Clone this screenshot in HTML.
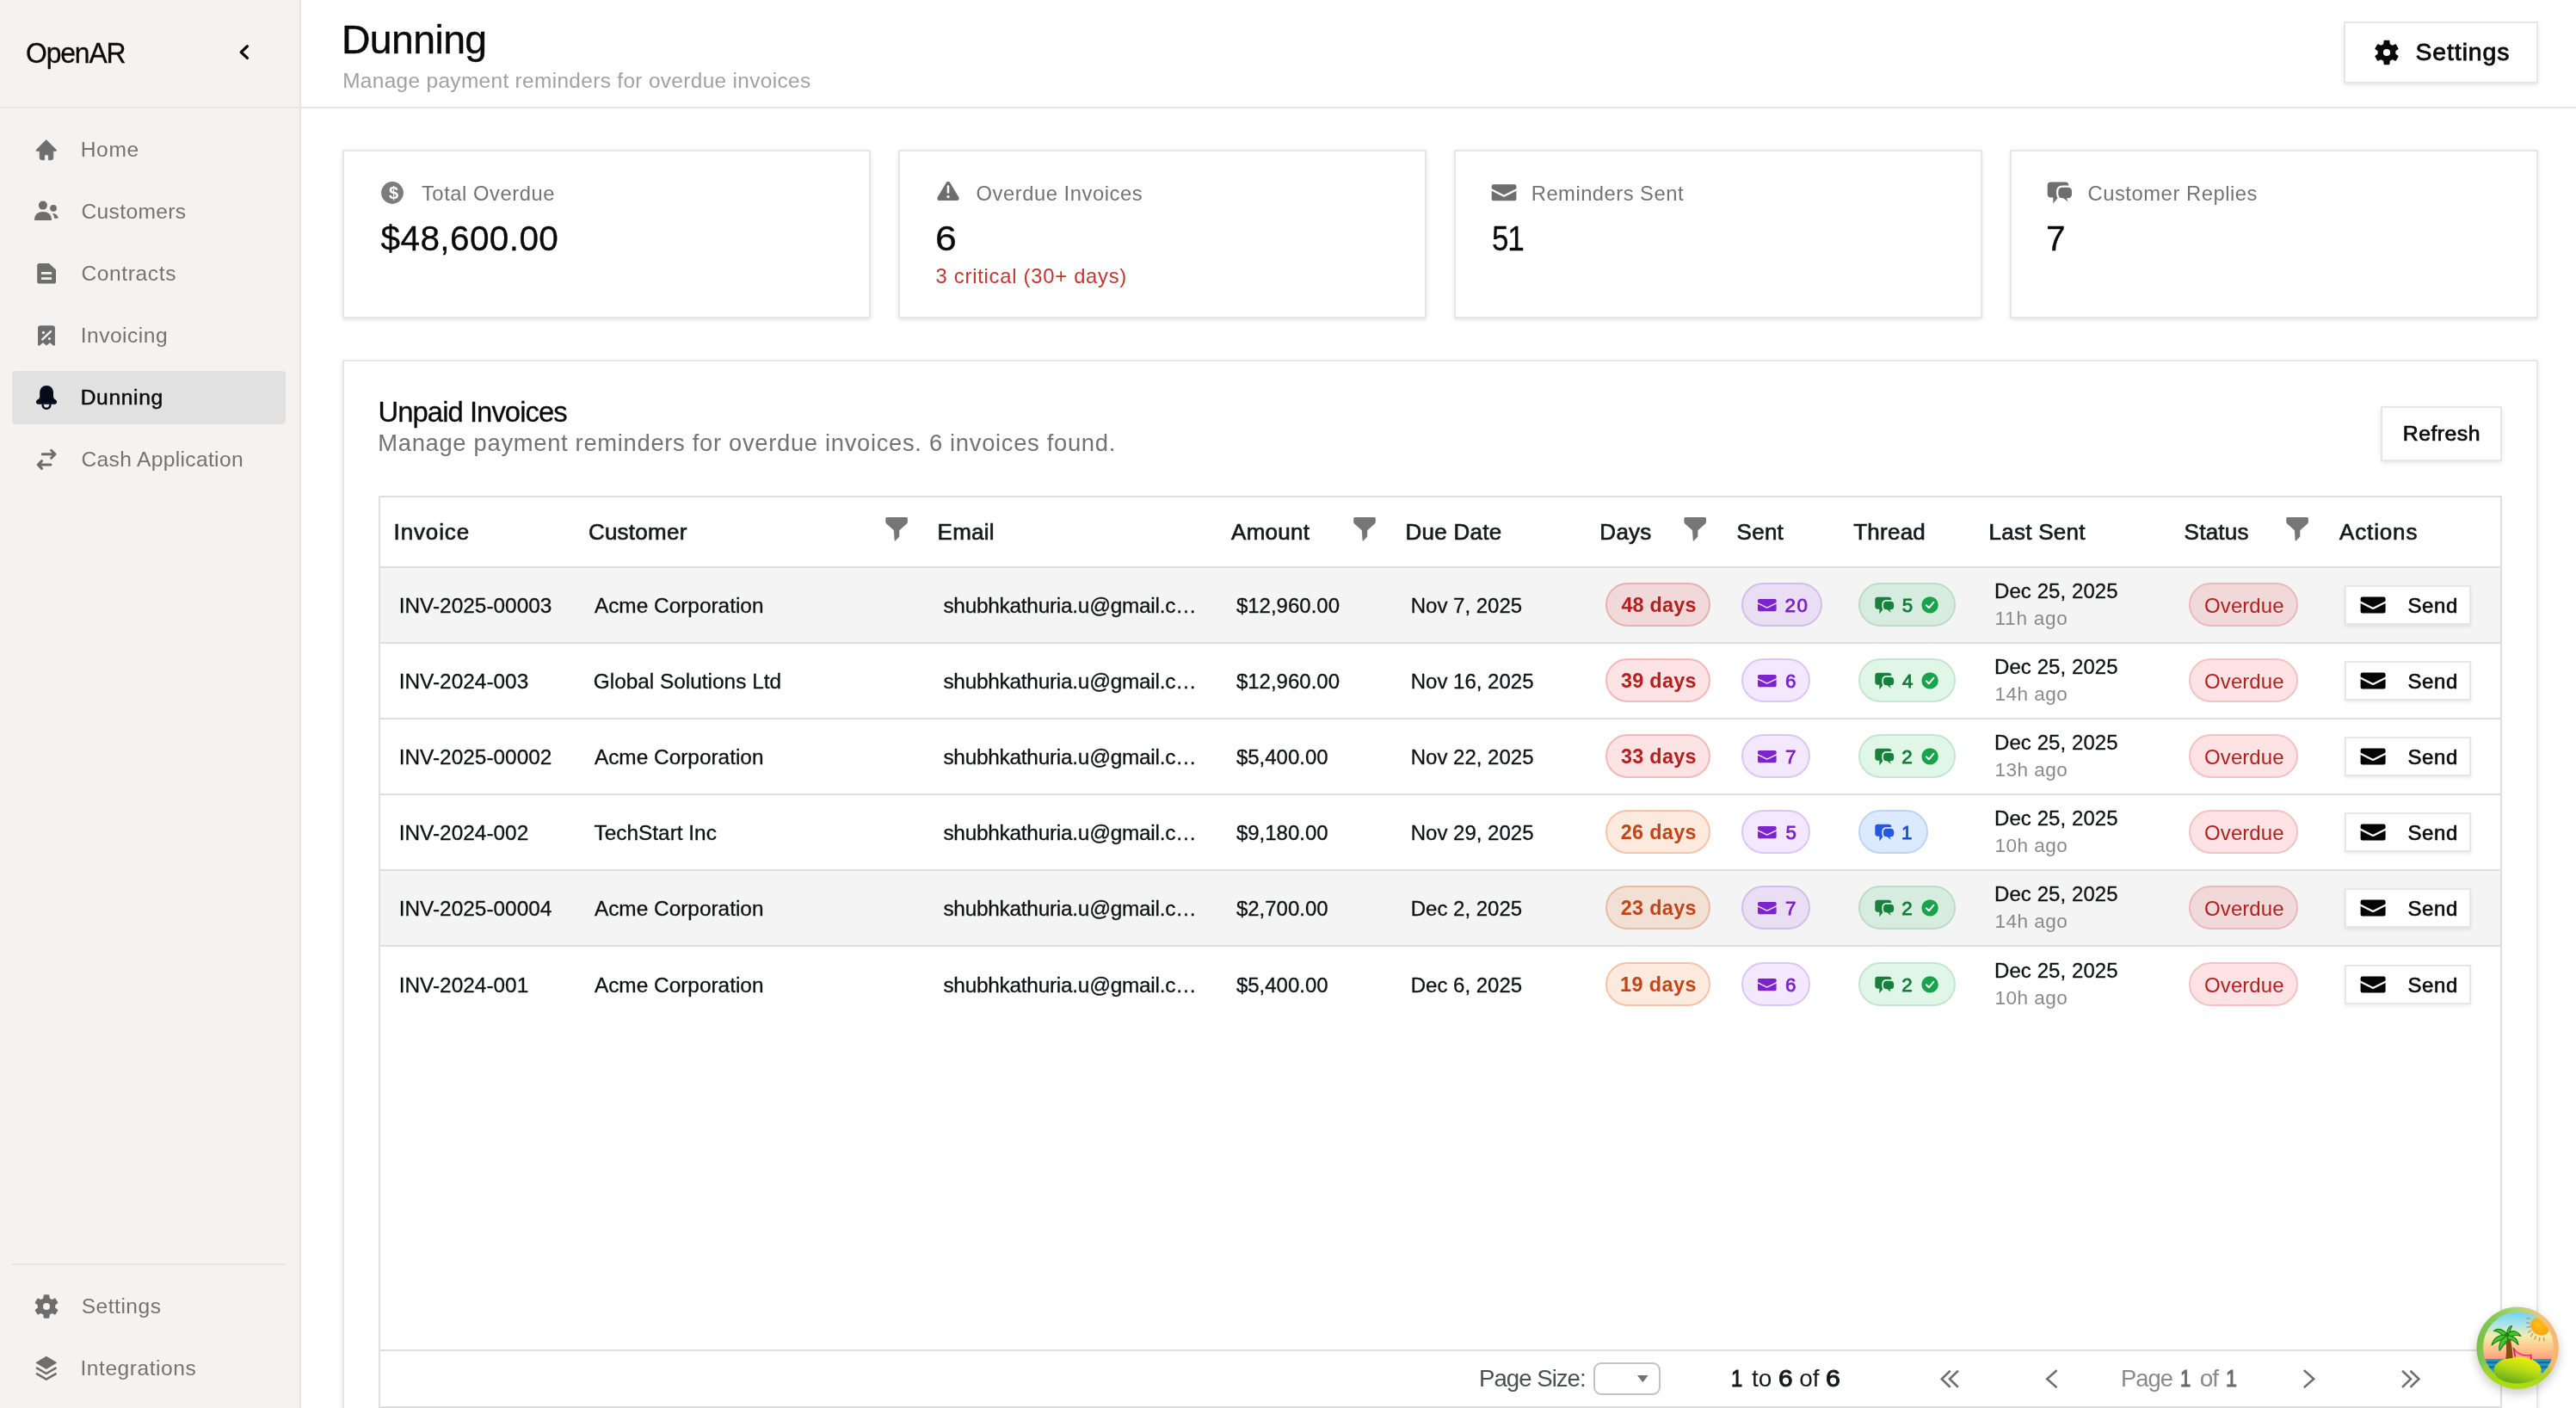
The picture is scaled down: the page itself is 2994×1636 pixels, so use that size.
<!DOCTYPE html>
<html lang="en"><head><meta charset="utf-8"><title>OpenAR - Dunning</title>
<style>
html,body{margin:0;padding:0;background:#fff;overflow:hidden;}
body{width:2994px;height:1636px;font-family:"Liberation Sans", sans-serif;}
#page{position:relative;width:2994px;height:1636px;overflow:hidden;background:#fff;}
#boxes div{position:absolute;box-sizing:border-box;}
#txt{position:absolute;left:0;top:0;width:2994px;height:1636px;will-change:transform;}
#txt span{position:absolute;white-space:nowrap;transform-origin:0 50%;font-family:"Liberation Sans", sans-serif;}
#ico{position:absolute;left:0;top:0;}
</style></head>
<body>
<div id="page">
<div id="boxes">
<div style="left:0px;top:0px;width:348px;height:1636px;background:#f4f3f1"></div>
<div style="left:348px;top:0px;width:2px;height:1636px;background:#e6e6e6"></div>
<div style="left:0px;top:124px;width:348px;height:2px;background:#e6e6e6"></div>
<div style="left:350px;top:124px;width:2644px;height:2px;background:#e6e6e6"></div>
<div style="left:14px;top:430.5px;width:318px;height:62.5px;background:#e1e1e1;border-radius:4px"></div>
<div style="left:14px;top:1468px;width:318px;height:2px;background:#e6e5e3"></div>
<div style="left:2724px;top:25px;width:226px;height:72px;background:#fff;border:2px solid #e6e6e6;box-shadow:0 2px 6px rgba(0,0,0,0.08),0 2px 4px -2px rgba(0,0,0,0.08);"></div>
<div style="left:398px;top:174px;width:614px;height:196px;background:#fff;border:2px solid #e6e6e6;box-shadow:0 2px 6px rgba(0,0,0,0.08),0 2px 4px -2px rgba(0,0,0,0.08);"></div>
<div style="left:1044px;top:174px;width:614px;height:196px;background:#fff;border:2px solid #e6e6e6;box-shadow:0 2px 6px rgba(0,0,0,0.08),0 2px 4px -2px rgba(0,0,0,0.08);"></div>
<div style="left:1690px;top:174px;width:614px;height:196px;background:#fff;border:2px solid #e6e6e6;box-shadow:0 2px 6px rgba(0,0,0,0.08),0 2px 4px -2px rgba(0,0,0,0.08);"></div>
<div style="left:2336px;top:174px;width:614px;height:196px;background:#fff;border:2px solid #e6e6e6;box-shadow:0 2px 6px rgba(0,0,0,0.08),0 2px 4px -2px rgba(0,0,0,0.08);"></div>
<div style="left:398px;top:418px;width:2552px;height:1230px;background:#fff;border:2px solid #e6e6e6;box-shadow:0 2px 6px rgba(0,0,0,0.08),0 2px 4px -2px rgba(0,0,0,0.08);"></div>
<div style="left:2767px;top:472px;width:141px;height:64px;background:#fff;border:2px solid #e6e6e6;box-shadow:0 2px 6px rgba(0,0,0,0.08),0 2px 4px -2px rgba(0,0,0,0.08);"></div>
<div style="left:440px;top:576px;width:2468px;height:1060px;background:#fff;border:2px solid #dedede"></div>
<div style="left:442px;top:658px;width:2464px;height:2px;background:#dedede"></div>
<div style="left:442px;top:1568px;width:2464px;height:2px;background:#dedede"></div>
<div style="left:442px;top:660px;width:2464px;height:86px;background:#f4f4f4"></div>
<div style="left:442px;top:746px;width:2464px;height:2px;background:#dedede"></div>
<div style="left:1866px;top:677px;width:122px;height:51px;background:#f2d9d9;border:2px solid #e7b1b1;border-radius:26px"></div>
<div style="left:2024px;top:677px;width:94px;height:51px;background:#e9def4;border:2px solid #d3bdea;border-radius:26px"></div>
<div style="left:2160px;top:677px;width:113px;height:51px;background:#d6ecde;border:2px solid #bcdcc5;border-radius:26px"></div>
<div style="left:2544px;top:677px;width:127px;height:51px;background:#f2d9d9;border:2px solid #e9baba;border-radius:26px"></div>
<div style="left:2725px;top:680px;width:147px;height:46px;background:#fff;border:2px solid #e6e6e6;box-shadow:0 2px 4px rgba(0,0,0,0.08);"></div>
<div style="left:442px;top:834px;width:2464px;height:2px;background:#dedede"></div>
<div style="left:1866px;top:765px;width:122px;height:51px;background:#fde3e3;border:2px solid #f1b9b9;border-radius:26px"></div>
<div style="left:2024px;top:765px;width:80px;height:51px;background:#f3e8ff;border:2px solid #dcc6f5;border-radius:26px"></div>
<div style="left:2160px;top:765px;width:113px;height:51px;background:#e0f7e8;border:2px solid #c4e6ce;border-radius:26px"></div>
<div style="left:2544px;top:765px;width:127px;height:51px;background:#fde3e3;border:2px solid #f3c2c2;border-radius:26px"></div>
<div style="left:2725px;top:768px;width:147px;height:46px;background:#fff;border:2px solid #e6e6e6;box-shadow:0 2px 4px rgba(0,0,0,0.08);"></div>
<div style="left:442px;top:922px;width:2464px;height:2px;background:#dedede"></div>
<div style="left:1866px;top:853px;width:122px;height:51px;background:#fde3e3;border:2px solid #f1b9b9;border-radius:26px"></div>
<div style="left:2024px;top:853px;width:80px;height:51px;background:#f3e8ff;border:2px solid #dcc6f5;border-radius:26px"></div>
<div style="left:2160px;top:853px;width:113px;height:51px;background:#e0f7e8;border:2px solid #c4e6ce;border-radius:26px"></div>
<div style="left:2544px;top:853px;width:127px;height:51px;background:#fde3e3;border:2px solid #f3c2c2;border-radius:26px"></div>
<div style="left:2725px;top:856px;width:147px;height:46px;background:#fff;border:2px solid #e6e6e6;box-shadow:0 2px 4px rgba(0,0,0,0.08);"></div>
<div style="left:442px;top:1010px;width:2464px;height:2px;background:#dedede"></div>
<div style="left:1866px;top:941px;width:122px;height:51px;background:#fdeadf;border:2px solid #f3c3aa;border-radius:26px"></div>
<div style="left:2024px;top:941px;width:80px;height:51px;background:#f3e8ff;border:2px solid #dcc6f5;border-radius:26px"></div>
<div style="left:2160px;top:941px;width:81px;height:51px;background:#dbeafe;border:2px solid #bfd3f7;border-radius:26px"></div>
<div style="left:2544px;top:941px;width:127px;height:51px;background:#fde3e3;border:2px solid #f3c2c2;border-radius:26px"></div>
<div style="left:2725px;top:944px;width:147px;height:46px;background:#fff;border:2px solid #e6e6e6;box-shadow:0 2px 4px rgba(0,0,0,0.08);"></div>
<div style="left:442px;top:1012px;width:2464px;height:86px;background:#f4f4f4"></div>
<div style="left:442px;top:1098px;width:2464px;height:2px;background:#dedede"></div>
<div style="left:1866px;top:1029px;width:122px;height:51px;background:#f2e0d5;border:2px solid #e9bba3;border-radius:26px"></div>
<div style="left:2024px;top:1029px;width:80px;height:51px;background:#e9def4;border:2px solid #d3bdea;border-radius:26px"></div>
<div style="left:2160px;top:1029px;width:113px;height:51px;background:#d6ecde;border:2px solid #bcdcc5;border-radius:26px"></div>
<div style="left:2544px;top:1029px;width:127px;height:51px;background:#f2d9d9;border:2px solid #e9baba;border-radius:26px"></div>
<div style="left:2725px;top:1032px;width:147px;height:46px;background:#fff;border:2px solid #e6e6e6;box-shadow:0 2px 4px rgba(0,0,0,0.08);"></div>
<div style="left:1866px;top:1118px;width:122px;height:51px;background:#fdeadf;border:2px solid #f3c3aa;border-radius:26px"></div>
<div style="left:2024px;top:1118px;width:80px;height:51px;background:#f3e8ff;border:2px solid #dcc6f5;border-radius:26px"></div>
<div style="left:2160px;top:1118px;width:113px;height:51px;background:#e0f7e8;border:2px solid #c4e6ce;border-radius:26px"></div>
<div style="left:2544px;top:1118px;width:127px;height:51px;background:#fde3e3;border:2px solid #f3c2c2;border-radius:26px"></div>
<div style="left:2725px;top:1121px;width:147px;height:46px;background:#fff;border:2px solid #e6e6e6;box-shadow:0 2px 4px rgba(0,0,0,0.08);"></div>
<div style="left:1851.5px;top:1582.7px;width:78.8px;height:38.8px;background:#fff;border:2px solid #c2c2c2;border-radius:9px"></div>
</div>
<svg id="ico" width="2994" height="1636" viewBox="0 0 2994 1636">
<path d="M287.4 53.8 L280.2 60.6 L287.4 67.4" fill="none" stroke="#0a0a0a" stroke-width="3.3" stroke-linecap="round" stroke-linejoin="round"/>
<path d="M53.8 162.6 L65.2 173.9 Q66.2 175.6 64.4 175.6 L61.8 175.6 L61.8 183.4 Q61.8 185.8 59.4 185.8 L56.4 185.8 L56.4 181.6 Q56.4 179.6 54 179.6 Q51.6 179.6 51.6 181.6 L51.6 185.8 L48.6 185.8 Q46.2 185.8 46.2 183.4 L46.2 175.6 L43.2 175.6 Q41.4 175.6 42.4 173.9 Z" fill="#6e6e6e" stroke="#6e6e6e" stroke-width="0.8" stroke-linejoin="round"/>
<circle cx="49.9" cy="238.6" r="5" fill="#6e6e6e"/><path d="M40.4 255.9 Q39.9 255.9 40 254.5 Q41 246 50 246 Q59 246 60 254.5 Q60.1 255.9 59.6 255.9 Z" fill="#6e6e6e"/><circle cx="62" cy="241.8" r="3.9" fill="#6e6e6e"/><path d="M60.9 248 Q66.3 248.2 67.6 252.6 Q67.8 253.8 66.6 253.8 L63.2 253.8 Q62.9 250.4 60.9 248 Z" fill="#6e6e6e"/>
<path d="M45.8 306 L57 306 L65 313.6 L65 327 Q65 329.6 62.4 329.6 L45.8 329.6 Q43.2 329.6 43.2 327 L43.2 308.6 Q43.2 306 45.8 306 Z" fill="#6e6e6e"/><rect x="47.9" y="316.1" width="12.3" height="2.7" rx="0.6" fill="#f4f3f1"/><rect x="47.9" y="322.2" width="12.3" height="2.7" rx="0.6" fill="#f4f3f1"/>
<path d="M47 378.2 L60.9 378.2 Q63.9 378.2 63.9 381.2 L63.9 401.4 L62 401.4 L58 398.2 L53.9 401.4 L49.9 398.2 L45.9 401.4 L44 401.4 L44 381.2 Q44 378.2 47 378.2 Z" fill="#6e6e6e"/><path d="M49.3 394.4 L59 385.1" stroke="#f4f3f1" stroke-width="2.4" stroke-linecap="round"/><circle cx="50.4" cy="386.4" r="1.6" fill="#f4f3f1"/><circle cx="57.5" cy="393.5" r="1.6" fill="#f4f3f1"/>
<path d="M46.2 466 V456.2 C46.2 451.4 49.6 448 54.1 448 C58.6 448 62 451.4 62 456.2 V466 Z" fill="#060b19"/><path d="M46.2 460 Q46 463.6 43.4 464.6 L46.2 466 Z M62 460 Q62.2 463.6 64.8 464.6 L62 466 Z" fill="#060b19"/><rect x="42" y="464.3" width="24" height="5.5" rx="2.75" fill="#060b19"/><path d="M49.6 470.5 Q50 474.7 54 474.7 Q58 474.7 58.4 470.5" fill="none" stroke="#060b19" stroke-width="2.5" stroke-linecap="round"/>
<path d="M49.2 527.7 H63.6 M59.6 523.3 L64 527.7 L59.6 532.1 M59 540 H44.6 M48.6 535.6 L44.2 540 L48.6 544.4" fill="none" stroke="#6e6e6e" stroke-width="3.0" stroke-linecap="round" stroke-linejoin="round"/>
<path d="M56.97 1508.87 L56.52 1505.04 L51.48 1505.04 L51.03 1508.87 L47.58 1510.87 L44.04 1509.34 L41.52 1513.70 L44.61 1516.00 L44.61 1520.00 L41.52 1522.30 L44.04 1526.66 L47.58 1525.13 L51.03 1527.13 L51.48 1530.96 L56.52 1530.96 L56.97 1527.13 L60.42 1525.13 L63.96 1526.66 L66.48 1522.30 L63.39 1520.00 L63.39 1516.00 L66.48 1513.70 L63.96 1509.34 L60.42 1510.87 Z" fill="#6e6e6e" stroke="#6e6e6e" stroke-width="1.6" stroke-linejoin="round"/><circle cx="54" cy="1518" r="4.0" fill="#f4f3f1"/>
<path d="M42.6 1583.4 L53.8 1576.8 L65 1583.4 L53.8 1590 Z" fill="#6e6e6e" stroke="#6e6e6e" stroke-width="1.6" stroke-linejoin="round"/><path d="M43 1589.6 L53.8 1596 L64.6 1589.6 M43 1596.3 L53.8 1602.7 L64.6 1596.3" fill="none" stroke="#6e6e6e" stroke-width="2.6" stroke-linecap="round" stroke-linejoin="round"/>
<path d="M2777.03 51.68 L2776.60 47.65 L2771.40 47.65 L2770.97 51.68 L2767.44 53.72 L2763.74 52.08 L2761.14 56.57 L2764.41 58.96 L2764.41 63.04 L2761.14 65.43 L2763.74 69.92 L2767.44 68.28 L2770.97 70.32 L2771.40 74.35 L2776.60 74.35 L2777.03 70.32 L2780.56 68.28 L2784.26 69.92 L2786.86 65.43 L2783.59 63.04 L2783.59 58.96 L2786.86 56.57 L2784.26 52.08 L2780.56 53.72 Z" fill="#0a0a0a" stroke="#0a0a0a" stroke-width="1.6" stroke-linejoin="round"/><circle cx="2774" cy="61" r="4.1" fill="#fff"/>
<circle cx="456" cy="224" r="12.9" fill="#7c7c7c"/>
<path d="M1102 213.6 L1112 230.4 L1092 230.4 Z" fill="#6e6e6e" stroke="#6e6e6e" stroke-width="5.2" stroke-linejoin="round"/><path d="M1102 216.6 V223.4" stroke="#fff" stroke-width="2.6" stroke-linecap="round"/><circle cx="1102" cy="228.6" r="1.7" fill="#fff"/>
<rect x="1733.7" y="214.2" width="28.7" height="19" rx="2.2" fill="#6e6e6e"/><path d="M1732.7 219.91 L1748.05 227.69 L1763.4 219.91" fill="none" stroke="#fff" stroke-width="2.3" stroke-linejoin="round"/>
<path d="M2383.70 211.40 L2400.20 211.40 Q2404.40 211.40 2404.40 215.40 L2404.40 225.40 Q2404.40 229.50 2400.20 229.50 L2392.00 229.50 L2386.30 236.60 L2386.30 229.50 L2383.70 229.50 Q2379.70 229.50 2379.70 225.40 L2379.70 215.40 Q2379.70 211.40 2383.70 211.40 Z" fill="#6e6e6e"/><path d="M2397.30 217.70 L2403.10 217.70 Q2408.10 217.70 2408.10 222.70 L2408.10 225.20 Q2408.10 230.20 2403.10 230.20 L2402.00 230.20 L2403.70 234.60 L2398.20 230.20 L2397.30 230.20 Q2392.30 230.20 2392.30 225.20 L2392.30 222.70 Q2392.30 217.70 2397.30 217.70 Z" fill="#6e6e6e" stroke="#fff" stroke-width="4.40" stroke-linejoin="round" paint-order="stroke"/>
<path transform="translate(1029.3 601)" d="M1.5 0 H24.1 Q25.6 0 25.6 1.5 V5.4 Q25.6 6.6 24.7 7.4 L16 15.3 V21.4 Q16 22.6 15.1 23.4 L11.5 27.2 Q10.4 28.1 10.3 26.6 L9.6 15.3 L0.9 7.4 Q0 6.6 0 5.4 V1.5 Q0 0 1.5 0 Z" fill="#767676"/>
<path transform="translate(1573.2 601)" d="M1.5 0 H24.1 Q25.6 0 25.6 1.5 V5.4 Q25.6 6.6 24.7 7.4 L16 15.3 V21.4 Q16 22.6 15.1 23.4 L11.5 27.2 Q10.4 28.1 10.3 26.6 L9.6 15.3 L0.9 7.4 Q0 6.6 0 5.4 V1.5 Q0 0 1.5 0 Z" fill="#767676"/>
<path transform="translate(1957.4 601)" d="M1.5 0 H24.1 Q25.6 0 25.6 1.5 V5.4 Q25.6 6.6 24.7 7.4 L16 15.3 V21.4 Q16 22.6 15.1 23.4 L11.5 27.2 Q10.4 28.1 10.3 26.6 L9.6 15.3 L0.9 7.4 Q0 6.6 0 5.4 V1.5 Q0 0 1.5 0 Z" fill="#767676"/>
<path transform="translate(2657.3 601)" d="M1.5 0 H24.1 Q25.6 0 25.6 1.5 V5.4 Q25.6 6.6 24.7 7.4 L16 15.3 V21.4 Q16 22.6 15.1 23.4 L11.5 27.2 Q10.4 28.1 10.3 26.6 L9.6 15.3 L0.9 7.4 Q0 6.6 0 5.4 V1.5 Q0 0 1.5 0 Z" fill="#767676"/>
<rect x="2043" y="696" width="21.6" height="14.2" rx="1.6" fill="#7e22ce"/><path d="M2042 700.37 L2053.8 706.08 L2065.6 700.37" fill="none" stroke="#e9def4" stroke-width="1.5" stroke-linejoin="round"/>
<circle cx="2243.1" cy="702.9" r="9.7" fill="#17a34a"/><path d="M2238.8 703.3 L2241.9 706.3 L2247.5 699.7" fill="none" stroke="#fff" stroke-width="1.9" stroke-linecap="round" stroke-linejoin="round"/>
<path d="M2182.38 693.80 L2195.09 693.80 Q2198.32 693.80 2198.32 696.88 L2198.32 704.58 Q2198.32 707.74 2195.09 707.74 L2188.77 707.74 L2184.38 713.20 L2184.38 707.74 L2182.38 707.74 Q2179.30 707.74 2179.30 704.58 L2179.30 696.88 Q2179.30 693.80 2182.38 693.80 Z" fill="#17803d"/><path d="M2192.85 698.65 L2197.32 698.65 Q2201.17 698.65 2201.17 702.50 L2201.17 704.43 Q2201.17 708.28 2197.32 708.28 L2196.47 708.28 L2197.78 711.66 L2193.55 708.28 L2192.85 708.28 Q2189.00 708.28 2189.00 704.43 L2189.00 702.50 Q2189.00 698.65 2192.85 698.65 Z" fill="#17803d" stroke="#d6ecde" stroke-width="3.39" stroke-linejoin="round" paint-order="stroke"/>
<rect x="2743.6" y="693.6" width="29" height="18.8" rx="2.2" fill="#050505"/><path d="M2742.6 699.28 L2758.1 706.95 L2773.6 699.28" fill="none" stroke="#fff" stroke-width="2.2" stroke-linejoin="round"/>
<rect x="2043" y="784" width="21.6" height="14.2" rx="1.6" fill="#7e22ce"/><path d="M2042 788.37 L2053.8 794.08 L2065.6 788.37" fill="none" stroke="#f3e8ff" stroke-width="1.5" stroke-linejoin="round"/>
<circle cx="2243.1" cy="790.9" r="9.7" fill="#17a34a"/><path d="M2238.8 791.3 L2241.9 794.3 L2247.5 787.7" fill="none" stroke="#fff" stroke-width="1.9" stroke-linecap="round" stroke-linejoin="round"/>
<path d="M2182.38 781.80 L2195.09 781.80 Q2198.32 781.80 2198.32 784.88 L2198.32 792.58 Q2198.32 795.74 2195.09 795.74 L2188.77 795.74 L2184.38 801.20 L2184.38 795.74 L2182.38 795.74 Q2179.30 795.74 2179.30 792.58 L2179.30 784.88 Q2179.30 781.80 2182.38 781.80 Z" fill="#17803d"/><path d="M2192.85 786.65 L2197.32 786.65 Q2201.17 786.65 2201.17 790.50 L2201.17 792.43 Q2201.17 796.28 2197.32 796.28 L2196.47 796.28 L2197.78 799.66 L2193.55 796.28 L2192.85 796.28 Q2189.00 796.28 2189.00 792.43 L2189.00 790.50 Q2189.00 786.65 2192.85 786.65 Z" fill="#17803d" stroke="#e0f7e8" stroke-width="3.39" stroke-linejoin="round" paint-order="stroke"/>
<rect x="2743.6" y="781.6" width="29" height="18.8" rx="2.2" fill="#050505"/><path d="M2742.6 787.28 L2758.1 794.95 L2773.6 787.28" fill="none" stroke="#fff" stroke-width="2.2" stroke-linejoin="round"/>
<rect x="2043" y="872" width="21.6" height="14.2" rx="1.6" fill="#7e22ce"/><path d="M2042 876.37 L2053.8 882.08 L2065.6 876.37" fill="none" stroke="#f3e8ff" stroke-width="1.5" stroke-linejoin="round"/>
<circle cx="2243.1" cy="878.9" r="9.7" fill="#17a34a"/><path d="M2238.8 879.3 L2241.9 882.3 L2247.5 875.7" fill="none" stroke="#fff" stroke-width="1.9" stroke-linecap="round" stroke-linejoin="round"/>
<path d="M2182.38 869.80 L2195.09 869.80 Q2198.32 869.80 2198.32 872.88 L2198.32 880.58 Q2198.32 883.74 2195.09 883.74 L2188.77 883.74 L2184.38 889.20 L2184.38 883.74 L2182.38 883.74 Q2179.30 883.74 2179.30 880.58 L2179.30 872.88 Q2179.30 869.80 2182.38 869.80 Z" fill="#17803d"/><path d="M2192.85 874.65 L2197.32 874.65 Q2201.17 874.65 2201.17 878.50 L2201.17 880.43 Q2201.17 884.28 2197.32 884.28 L2196.47 884.28 L2197.78 887.66 L2193.55 884.28 L2192.85 884.28 Q2189.00 884.28 2189.00 880.43 L2189.00 878.50 Q2189.00 874.65 2192.85 874.65 Z" fill="#17803d" stroke="#e0f7e8" stroke-width="3.39" stroke-linejoin="round" paint-order="stroke"/>
<rect x="2743.6" y="869.6" width="29" height="18.8" rx="2.2" fill="#050505"/><path d="M2742.6 875.28 L2758.1 882.95 L2773.6 875.28" fill="none" stroke="#fff" stroke-width="2.2" stroke-linejoin="round"/>
<rect x="2043" y="960" width="21.6" height="14.2" rx="1.6" fill="#7e22ce"/><path d="M2042 964.37 L2053.8 970.08 L2065.6 964.37" fill="none" stroke="#f3e8ff" stroke-width="1.5" stroke-linejoin="round"/>
<path d="M2182.38 957.80 L2195.09 957.80 Q2198.32 957.80 2198.32 960.88 L2198.32 968.58 Q2198.32 971.74 2195.09 971.74 L2188.77 971.74 L2184.38 977.20 L2184.38 971.74 L2182.38 971.74 Q2179.30 971.74 2179.30 968.58 L2179.30 960.88 Q2179.30 957.80 2182.38 957.80 Z" fill="#2459df"/><path d="M2192.85 962.65 L2197.32 962.65 Q2201.17 962.65 2201.17 966.50 L2201.17 968.43 Q2201.17 972.28 2197.32 972.28 L2196.47 972.28 L2197.78 975.66 L2193.55 972.28 L2192.85 972.28 Q2189.00 972.28 2189.00 968.43 L2189.00 966.50 Q2189.00 962.65 2192.85 962.65 Z" fill="#2459df" stroke="#dbeafe" stroke-width="3.39" stroke-linejoin="round" paint-order="stroke"/>
<rect x="2743.6" y="957.6" width="29" height="18.8" rx="2.2" fill="#050505"/><path d="M2742.6 963.28 L2758.1 970.95 L2773.6 963.28" fill="none" stroke="#fff" stroke-width="2.2" stroke-linejoin="round"/>
<rect x="2043" y="1048" width="21.6" height="14.2" rx="1.6" fill="#7e22ce"/><path d="M2042 1052.37 L2053.8 1058.08 L2065.6 1052.37" fill="none" stroke="#e9def4" stroke-width="1.5" stroke-linejoin="round"/>
<circle cx="2243.1" cy="1054.9" r="9.7" fill="#17a34a"/><path d="M2238.8 1055.3 L2241.9 1058.3 L2247.5 1051.7" fill="none" stroke="#fff" stroke-width="1.9" stroke-linecap="round" stroke-linejoin="round"/>
<path d="M2182.38 1045.80 L2195.09 1045.80 Q2198.32 1045.80 2198.32 1048.88 L2198.32 1056.58 Q2198.32 1059.74 2195.09 1059.74 L2188.77 1059.74 L2184.38 1065.20 L2184.38 1059.74 L2182.38 1059.74 Q2179.30 1059.74 2179.30 1056.58 L2179.30 1048.88 Q2179.30 1045.80 2182.38 1045.80 Z" fill="#17803d"/><path d="M2192.85 1050.65 L2197.32 1050.65 Q2201.17 1050.65 2201.17 1054.50 L2201.17 1056.43 Q2201.17 1060.28 2197.32 1060.28 L2196.47 1060.28 L2197.78 1063.66 L2193.55 1060.28 L2192.85 1060.28 Q2189.00 1060.28 2189.00 1056.43 L2189.00 1054.50 Q2189.00 1050.65 2192.85 1050.65 Z" fill="#17803d" stroke="#d6ecde" stroke-width="3.39" stroke-linejoin="round" paint-order="stroke"/>
<rect x="2743.6" y="1045.6" width="29" height="18.8" rx="2.2" fill="#050505"/><path d="M2742.6 1051.28 L2758.1 1058.95 L2773.6 1051.28" fill="none" stroke="#fff" stroke-width="2.2" stroke-linejoin="round"/>
<rect x="2043" y="1137" width="21.6" height="14.2" rx="1.6" fill="#7e22ce"/><path d="M2042 1141.37 L2053.8 1147.08 L2065.6 1141.37" fill="none" stroke="#f3e8ff" stroke-width="1.5" stroke-linejoin="round"/>
<circle cx="2243.1" cy="1143.9" r="9.7" fill="#17a34a"/><path d="M2238.8 1144.3 L2241.9 1147.3 L2247.5 1140.7" fill="none" stroke="#fff" stroke-width="1.9" stroke-linecap="round" stroke-linejoin="round"/>
<path d="M2182.38 1134.80 L2195.09 1134.80 Q2198.32 1134.80 2198.32 1137.88 L2198.32 1145.58 Q2198.32 1148.74 2195.09 1148.74 L2188.77 1148.74 L2184.38 1154.20 L2184.38 1148.74 L2182.38 1148.74 Q2179.30 1148.74 2179.30 1145.58 L2179.30 1137.88 Q2179.30 1134.80 2182.38 1134.80 Z" fill="#17803d"/><path d="M2192.85 1139.65 L2197.32 1139.65 Q2201.17 1139.65 2201.17 1143.50 L2201.17 1145.43 Q2201.17 1149.28 2197.32 1149.28 L2196.47 1149.28 L2197.78 1152.66 L2193.55 1149.28 L2192.85 1149.28 Q2189.00 1149.28 2189.00 1145.43 L2189.00 1143.50 Q2189.00 1139.65 2192.85 1139.65 Z" fill="#17803d" stroke="#e0f7e8" stroke-width="3.39" stroke-linejoin="round" paint-order="stroke"/>
<rect x="2743.6" y="1134.6" width="29" height="18.8" rx="2.2" fill="#050505"/><path d="M2742.6 1140.28 L2758.1 1147.95 L2773.6 1140.28" fill="none" stroke="#fff" stroke-width="2.2" stroke-linejoin="round"/>
<path d="M1903 1598 L1915.6 1598 L1909.3 1606.2 Z" fill="#737373"/>
<path d="M2265.8 1593.6 L2256.8 1602.3 L2265.8 1611 M2275 1593.6 L2266 1602.3 L2275 1611 M2389.6 1593 L2379.2 1602.2 L2389.6 1611.4 M2678.8 1593 L2689.2000000000003 1602.2 L2678.8 1611.4 M2793 1593.6 L2802 1602.3 L2793 1611 M2802.4 1593.6 L2811.4 1602.3 L2802.4 1611" fill="none" stroke="#6f6f6f" stroke-width="2.6" stroke-linecap="square" stroke-linejoin="miter"/>

<defs>
 <linearGradient id="avr" x1="0" y1="0.3" x2="1" y2="0.45"><stop offset="0" stop-color="#74bf45"/><stop offset="0.45" stop-color="#a9d678"/><stop offset="0.75" stop-color="#f3c27c"/><stop offset="1" stop-color="#f8b56f"/></linearGradient>
 <linearGradient id="avs" x1="0" y1="0" x2="0" y2="1"><stop offset="0" stop-color="#6fd3f5"/><stop offset="0.16" stop-color="#a5e3ea"/><stop offset="0.34" stop-color="#f3ecad"/><stop offset="0.52" stop-color="#ffc48d"/><stop offset="0.68" stop-color="#ff9a80"/><stop offset="1" stop-color="#ff8d78"/></linearGradient>
 <linearGradient id="avh" x1="0.75" y1="0" x2="0.3" y2="1"><stop offset="0" stop-color="#f3ee0a"/><stop offset="0.45" stop-color="#b9dc14"/><stop offset="1" stop-color="#62a81c"/></linearGradient>
 <linearGradient id="avb" x1="0" y1="0" x2="0" y2="1"><stop offset="0" stop-color="#9fd31a" stop-opacity="0"/><stop offset="0.4" stop-color="#a6d818" stop-opacity="1"/><stop offset="1" stop-color="#c6e60f"/></linearGradient>
 <radialGradient id="avsun" cx="0.4" cy="0.45" r="0.6"><stop offset="0" stop-color="#ffbe1a"/><stop offset="1" stop-color="#ffa408"/></radialGradient>
 <clipPath id="avo"><circle cx="2926.1" cy="1566.3" r="47.7"/></clipPath>
 <clipPath id="avc"><circle cx="2927" cy="1565.5" r="41"/></clipPath>
 <filter id="avf" x="-30%" y="-30%" width="160%" height="170%"><feDropShadow dx="0" dy="5" stdDeviation="6" flood-color="#000" flood-opacity="0.22"/></filter>
</defs>
<circle cx="2926.1" cy="1566.3" r="47.7" fill="url(#avr)" filter="url(#avf)"/>
<g clip-path="url(#avo)"><ellipse cx="2924" cy="1607" rx="52" ry="30" fill="url(#avb)"/></g>
<circle cx="2927" cy="1565.5" r="41" fill="url(#avs)"/>
<g clip-path="url(#avc)">
 <ellipse cx="2952" cy="1541.5" rx="11.5" ry="9.5" transform="rotate(38 2952 1541.5)" fill="url(#avsun)"/>
 <g stroke="#cf9560" stroke-width="1.5" stroke-linecap="round" fill="none"><path d="M2936.5 1532 h3.6 M2936.3 1537 l3.8 0.4 M2937 1542 l3.8 -0.6 M2938.6 1548 l3 -2 M2941.6 1552.6 l2.2 -2.8 M2946 1556 l1.4 -3.2 M2951.4 1557.8 l0.4 -3.4 M2957 1558 l-0.5 -3.4"/></g>
 <path d="M2888 1579 h22 v16 h-22 z M2944 1579 h22 v16 h-22 z" fill="#1f9cc4"/>
 <path d="M2888 1583 h22 M2888 1588.5 h22 M2944 1583 h22 M2944 1588.5 h22" stroke="#1a6c9c" stroke-width="2.4" fill="none"/>
</g>
<g clip-path="url(#avo)">
 <ellipse cx="2926" cy="1592" rx="27.6" ry="15.4" fill="url(#avh)"/>
 <path d="M2912.2 1579 Q2914.5 1565 2910.8 1550 L2916 1549 Q2920.5 1565 2920.6 1578 Z" fill="#8a4a14"/>
 <g fill="#43c62c" stroke="#1b7a16" stroke-width="1.1" stroke-linejoin="round">
  <path d="M2913.5 1549.5 Q2905 1541 2898.5 1546.5 Q2905 1547 2909.5 1553 Z"/>
  <path d="M2912.5 1551 Q2899 1551 2896 1563 Q2903 1557 2911 1556 Z"/>
  <path d="M2913 1552 Q2903 1558 2905 1569.5 Q2910 1562 2916 1556 Z"/>
  <path d="M2913.5 1549.5 Q2915 1541 2919.5 1540.5 Q2917.5 1545 2916.5 1550.5 Z"/>
  <path d="M2914.5 1549.5 Q2923 1542.5 2930 1552.5 Q2923 1550 2918 1553.5 Z"/>
  <path d="M2915 1551.5 Q2926 1553 2927 1562.5 Q2921 1556.5 2914.5 1556 Z"/>
 </g>
 <path d="M2921.6 1566.5 L2923.3 1576 M2921.8 1567.5 Q2929 1577 2941.5 1574.5 L2941.8 1579" stroke="#d81f55" stroke-width="1.7" fill="none" stroke-linecap="round"/>
 <path d="M2923 1569.5 Q2930 1577 2941 1575.5" stroke="#ff5fa2" stroke-width="1.2" fill="none"/>
</g>

</svg>
<div id="txt">
<span style="left:30.11px;top:44.72px;font-size:33.4px;line-height:33.4px;color:#0a0a0a;letter-spacing:-1.169px;transform:scaleX(0.9537);-webkit-text-stroke:0.3px #0a0a0a;">OpenAR</span>
<span style="left:93.68px;top:162.17px;font-size:24.6px;line-height:24.6px;color:#737373;letter-spacing:0.633px;">Home</span>
<span style="left:94.45px;top:234.17px;font-size:24.6px;line-height:24.6px;color:#737373;letter-spacing:0.349px;">Customers</span>
<span style="left:94.45px;top:306.17px;font-size:24.6px;line-height:24.6px;color:#737373;letter-spacing:0.594px;">Contracts</span>
<span style="left:93.68px;top:378.17px;font-size:24.6px;line-height:24.6px;color:#737373;letter-spacing:0.489px;">Invoicing</span>
<span style="left:93.68px;top:450.17px;font-size:24.6px;line-height:24.6px;color:#0a0a0a;letter-spacing:0.661px;-webkit-text-stroke:0.5px #0a0a0a;">Dunning</span>
<span style="left:94.45px;top:522.17px;font-size:24.6px;line-height:24.6px;color:#737373;letter-spacing:0.328px;">Cash Application</span>
<span style="left:94.63px;top:1505.97px;font-size:24.6px;line-height:24.6px;color:#737373;letter-spacing:0.507px;">Settings</span>
<span style="left:93.48px;top:1577.97px;font-size:24.6px;line-height:24.6px;color:#737373;letter-spacing:0.531px;">Integrations</span>
<span style="left:396.98px;top:23.21px;font-size:46.4px;line-height:46.4px;color:#0a0a0a;letter-spacing:-0.602px;-webkit-text-stroke:0.4px #0a0a0a;">Dunning</span>
<span style="left:398.19px;top:81.84px;font-size:24.4px;line-height:24.4px;color:#a1a1a1;letter-spacing:0.346px;">Manage payment reminders for overdue invoices</span>
<span style="left:2807.51px;top:46.25px;font-size:28.4px;line-height:28.4px;color:#0a0a0a;letter-spacing:0.908px;-webkit-text-stroke:0.8px #0a0a0a;">Settings</span>
<span style="left:451.50px;top:214.27px;font-size:20px;line-height:20px;color:#fff;font-weight:700;transform:scaleX(0.9966);">$</span>
<span style="left:489.93px;top:212.65px;font-size:23.8px;line-height:23.8px;color:#737373;letter-spacing:0.539px;">Total Overdue</span>
<span style="left:442.60px;top:256.62px;font-size:40.6px;line-height:40.6px;color:#0a0a0a;letter-spacing:0.357px;-webkit-text-stroke:0.3px #0a0a0a;">$48,600.00</span>
<span style="left:1134.48px;top:212.65px;font-size:23.8px;line-height:23.8px;color:#737373;letter-spacing:0.530px;">Overdue Invoices</span>
<span style="left:1086.50px;top:256.62px;font-size:40.6px;line-height:40.6px;color:#0a0a0a;transform:scaleX(1.1034);-webkit-text-stroke:0.3px #0a0a0a;">6</span>
<span style="left:1087.56px;top:308.65px;font-size:23.8px;line-height:23.8px;color:#c4352f;letter-spacing:0.738px;">3 critical (30+ days)</span>
<span style="left:1779.74px;top:212.65px;font-size:23.8px;line-height:23.8px;color:#737373;letter-spacing:0.472px;">Reminders Sent</span>
<span style="left:1734.20px;top:256.62px;font-size:40.6px;line-height:40.6px;color:#0a0a0a;letter-spacing:-1.421px;transform:scaleX(0.8647);-webkit-text-stroke:0.3px #0a0a0a;">51</span>
<span style="left:2426.48px;top:212.65px;font-size:23.8px;line-height:23.8px;color:#737373;letter-spacing:0.528px;">Customer Replies</span>
<span style="left:2378.19px;top:256.62px;font-size:40.6px;line-height:40.6px;color:#0a0a0a;transform:scaleX(1.0036);-webkit-text-stroke:0.3px #0a0a0a;">7</span>
<span style="left:439.55px;top:463.03px;font-size:32.8px;line-height:32.8px;color:#0a0a0a;letter-spacing:-0.950px;-webkit-text-stroke:0.3px #0a0a0a;">Unpaid Invoices</span>
<span style="left:439.26px;top:500.50px;font-size:27.4px;line-height:27.4px;color:#737373;letter-spacing:0.674px;">Manage payment reminders for overdue invoices. 6 invoices found.</span>
<span style="left:2792.86px;top:491.80px;font-size:24.8px;line-height:24.8px;color:#0a0a0a;letter-spacing:0.466px;-webkit-text-stroke:0.7px #0a0a0a;">Refresh</span>
<span style="left:457.57px;top:604.99px;font-size:26px;line-height:26px;color:#161a1c;letter-spacing:0.868px;-webkit-text-stroke:0.65px #161a1c;">Invoice</span>
<span style="left:683.88px;top:604.99px;font-size:26px;line-height:26px;color:#161a1c;-webkit-text-stroke:0.65px #161a1c;letter-spacing:0.25px;">Customer</span>
<span style="left:1089.57px;top:604.99px;font-size:26px;line-height:26px;color:#161a1c;-webkit-text-stroke:0.65px #161a1c;letter-spacing:0.25px;">Email</span>
<span style="left:1431.10px;top:604.99px;font-size:26px;line-height:26px;color:#161a1c;-webkit-text-stroke:0.65px #161a1c;letter-spacing:0.25px;">Amount</span>
<span style="left:1633.57px;top:604.99px;font-size:26px;line-height:26px;color:#161a1c;-webkit-text-stroke:0.65px #161a1c;letter-spacing:0.25px;">Due Date</span>
<span style="left:1859.37px;top:604.99px;font-size:26px;line-height:26px;color:#161a1c;-webkit-text-stroke:0.65px #161a1c;letter-spacing:0.25px;">Days</span>
<span style="left:2018.59px;top:604.99px;font-size:26px;line-height:26px;color:#161a1c;-webkit-text-stroke:0.65px #161a1c;letter-spacing:0.25px;">Sent</span>
<span style="left:2154.19px;top:604.99px;font-size:26px;line-height:26px;color:#161a1c;-webkit-text-stroke:0.65px #161a1c;letter-spacing:0.25px;">Thread</span>
<span style="left:2311.57px;top:604.99px;font-size:26px;line-height:26px;color:#161a1c;-webkit-text-stroke:0.65px #161a1c;letter-spacing:0.25px;">Last Sent</span>
<span style="left:2538.59px;top:604.99px;font-size:26px;line-height:26px;color:#161a1c;-webkit-text-stroke:0.65px #161a1c;letter-spacing:0.25px;">Status</span>
<span style="left:2719.10px;top:604.99px;font-size:26px;line-height:26px;color:#161a1c;letter-spacing:0.842px;-webkit-text-stroke:0.65px #161a1c;">Actions</span>
<span style="left:463.69px;top:691.64px;font-size:24.4px;line-height:24.4px;color:#0e1112;-webkit-text-stroke:0.3px #0e1112;">INV-2025-00003</span>
<span style="left:690.90px;top:691.64px;font-size:24.4px;line-height:24.4px;color:#0e1112;-webkit-text-stroke:0.3px #0e1112;">Acme Corporation</span>
<span style="left:1096.42px;top:691.64px;font-size:24.4px;line-height:24.4px;color:#0e1112;letter-spacing:-0.255px;-webkit-text-stroke:0.3px #0e1112;">shubhkathuria.u@gmail.c…</span>
<span style="left:1436.90px;top:691.98px;font-size:24px;line-height:24px;color:#0e1112;-webkit-text-stroke:0.3px #0e1112;">$12,960.00</span>
<span style="left:1639.72px;top:691.98px;font-size:24px;line-height:24px;color:#0e1112;-webkit-text-stroke:0.3px #0e1112;">Nov 7, 2025</span>
<span style="left:1884.40px;top:692.19px;font-size:23.4px;line-height:23.4px;color:#b3201f;font-weight:700;letter-spacing:0.214px;">48 days</span>
<span style="left:2074.55px;top:692.73px;font-size:22.4px;line-height:22.4px;color:#7a22c9;letter-spacing:1.492px;-webkit-text-stroke:0.8px #7a22c9;">20</span>
<span style="left:2210.70px;top:692.73px;font-size:22.4px;line-height:22.4px;color:#17793b;-webkit-text-stroke:0.8px #17793b;">5</span>
<span style="left:2318.03px;top:675.28px;font-size:24px;line-height:24px;color:#0e1112;letter-spacing:0.071px;-webkit-text-stroke:0.3px #0e1112;">Dec 25, 2025</span>
<span style="left:2318.49px;top:708.46px;font-size:22.6px;line-height:22.6px;color:#8a8a8a;letter-spacing:0.719px;">11h ago</span>
<span style="left:2562.07px;top:691.98px;font-size:24px;line-height:24px;color:#b3201f;letter-spacing:0.074px;">Overdue</span>
<span style="left:2798.45px;top:691.98px;font-size:24px;line-height:24px;color:#0a0a0a;letter-spacing:0.649px;-webkit-text-stroke:0.6px #0a0a0a;">Send</span>
<span style="left:463.69px;top:779.64px;font-size:24.4px;line-height:24.4px;color:#0e1112;-webkit-text-stroke:0.3px #0e1112;">INV-2024-003</span>
<span style="left:689.76px;top:779.64px;font-size:24.4px;line-height:24.4px;color:#0e1112;-webkit-text-stroke:0.3px #0e1112;">Global Solutions Ltd</span>
<span style="left:1096.42px;top:779.64px;font-size:24.4px;line-height:24.4px;color:#0e1112;letter-spacing:-0.255px;-webkit-text-stroke:0.3px #0e1112;">shubhkathuria.u@gmail.c…</span>
<span style="left:1436.90px;top:779.98px;font-size:24px;line-height:24px;color:#0e1112;-webkit-text-stroke:0.3px #0e1112;">$12,960.00</span>
<span style="left:1639.72px;top:779.98px;font-size:24px;line-height:24px;color:#0e1112;-webkit-text-stroke:0.3px #0e1112;">Nov 16, 2025</span>
<span style="left:1884.03px;top:780.19px;font-size:23.4px;line-height:23.4px;color:#b3201f;font-weight:700;letter-spacing:0.275px;">39 days</span>
<span style="left:2075.05px;top:780.73px;font-size:22.4px;line-height:22.4px;color:#7a22c9;-webkit-text-stroke:0.8px #7a22c9;">6</span>
<span style="left:2211.05px;top:780.73px;font-size:22.4px;line-height:22.4px;color:#17793b;-webkit-text-stroke:0.8px #17793b;">4</span>
<span style="left:2318.03px;top:763.28px;font-size:24px;line-height:24px;color:#0e1112;letter-spacing:0.071px;-webkit-text-stroke:0.3px #0e1112;">Dec 25, 2025</span>
<span style="left:2318.49px;top:796.46px;font-size:22.6px;line-height:22.6px;color:#8a8a8a;letter-spacing:0.439px;">14h ago</span>
<span style="left:2562.07px;top:779.98px;font-size:24px;line-height:24px;color:#b3201f;letter-spacing:0.074px;">Overdue</span>
<span style="left:2798.45px;top:779.98px;font-size:24px;line-height:24px;color:#0a0a0a;letter-spacing:0.649px;-webkit-text-stroke:0.6px #0a0a0a;">Send</span>
<span style="left:463.69px;top:867.64px;font-size:24.4px;line-height:24.4px;color:#0e1112;-webkit-text-stroke:0.3px #0e1112;">INV-2025-00002</span>
<span style="left:690.90px;top:867.64px;font-size:24.4px;line-height:24.4px;color:#0e1112;-webkit-text-stroke:0.3px #0e1112;">Acme Corporation</span>
<span style="left:1096.42px;top:867.64px;font-size:24.4px;line-height:24.4px;color:#0e1112;letter-spacing:-0.255px;-webkit-text-stroke:0.3px #0e1112;">shubhkathuria.u@gmail.c…</span>
<span style="left:1436.90px;top:867.98px;font-size:24px;line-height:24px;color:#0e1112;-webkit-text-stroke:0.3px #0e1112;">$5,400.00</span>
<span style="left:1639.72px;top:867.98px;font-size:24px;line-height:24px;color:#0e1112;-webkit-text-stroke:0.3px #0e1112;">Nov 22, 2025</span>
<span style="left:1884.03px;top:868.19px;font-size:23.4px;line-height:23.4px;color:#b3201f;font-weight:700;letter-spacing:0.275px;">33 days</span>
<span style="left:2075.05px;top:868.73px;font-size:22.4px;line-height:22.4px;color:#7a22c9;-webkit-text-stroke:0.8px #7a22c9;">7</span>
<span style="left:2210.35px;top:868.73px;font-size:22.4px;line-height:22.4px;color:#17793b;-webkit-text-stroke:0.8px #17793b;">2</span>
<span style="left:2318.03px;top:851.28px;font-size:24px;line-height:24px;color:#0e1112;letter-spacing:0.071px;-webkit-text-stroke:0.3px #0e1112;">Dec 25, 2025</span>
<span style="left:2318.49px;top:884.46px;font-size:22.6px;line-height:22.6px;color:#8a8a8a;letter-spacing:0.439px;">13h ago</span>
<span style="left:2562.07px;top:867.98px;font-size:24px;line-height:24px;color:#b3201f;letter-spacing:0.074px;">Overdue</span>
<span style="left:2798.45px;top:867.98px;font-size:24px;line-height:24px;color:#0a0a0a;letter-spacing:0.649px;-webkit-text-stroke:0.6px #0a0a0a;">Send</span>
<span style="left:463.69px;top:955.64px;font-size:24.4px;line-height:24.4px;color:#0e1112;-webkit-text-stroke:0.3px #0e1112;">INV-2024-002</span>
<span style="left:690.52px;top:955.64px;font-size:24.4px;line-height:24.4px;color:#0e1112;-webkit-text-stroke:0.3px #0e1112;">TechStart Inc</span>
<span style="left:1096.42px;top:955.64px;font-size:24.4px;line-height:24.4px;color:#0e1112;letter-spacing:-0.255px;-webkit-text-stroke:0.3px #0e1112;">shubhkathuria.u@gmail.c…</span>
<span style="left:1436.90px;top:955.98px;font-size:24px;line-height:24px;color:#0e1112;-webkit-text-stroke:0.3px #0e1112;">$9,180.00</span>
<span style="left:1639.72px;top:955.98px;font-size:24px;line-height:24px;color:#0e1112;-webkit-text-stroke:0.3px #0e1112;">Nov 29, 2025</span>
<span style="left:1883.67px;top:956.19px;font-size:23.4px;line-height:23.4px;color:#c0461a;font-weight:700;letter-spacing:0.336px;">26 days</span>
<span style="left:2075.40px;top:956.73px;font-size:22.4px;line-height:22.4px;color:#7a22c9;-webkit-text-stroke:0.8px #7a22c9;">5</span>
<span style="left:2210.00px;top:956.73px;font-size:22.4px;line-height:22.4px;color:#1f4fd0;-webkit-text-stroke:0.8px #1f4fd0;">1</span>
<span style="left:2318.03px;top:939.28px;font-size:24px;line-height:24px;color:#0e1112;letter-spacing:0.071px;-webkit-text-stroke:0.3px #0e1112;">Dec 25, 2025</span>
<span style="left:2318.49px;top:972.46px;font-size:22.6px;line-height:22.6px;color:#8a8a8a;letter-spacing:0.439px;">10h ago</span>
<span style="left:2562.07px;top:955.98px;font-size:24px;line-height:24px;color:#b3201f;letter-spacing:0.074px;">Overdue</span>
<span style="left:2798.45px;top:955.98px;font-size:24px;line-height:24px;color:#0a0a0a;letter-spacing:0.649px;-webkit-text-stroke:0.6px #0a0a0a;">Send</span>
<span style="left:463.69px;top:1043.64px;font-size:24.4px;line-height:24.4px;color:#0e1112;-webkit-text-stroke:0.3px #0e1112;">INV-2025-00004</span>
<span style="left:690.90px;top:1043.64px;font-size:24.4px;line-height:24.4px;color:#0e1112;-webkit-text-stroke:0.3px #0e1112;">Acme Corporation</span>
<span style="left:1096.42px;top:1043.64px;font-size:24.4px;line-height:24.4px;color:#0e1112;letter-spacing:-0.255px;-webkit-text-stroke:0.3px #0e1112;">shubhkathuria.u@gmail.c…</span>
<span style="left:1436.90px;top:1043.98px;font-size:24px;line-height:24px;color:#0e1112;-webkit-text-stroke:0.3px #0e1112;">$2,700.00</span>
<span style="left:1639.72px;top:1043.98px;font-size:24px;line-height:24px;color:#0e1112;-webkit-text-stroke:0.3px #0e1112;">Dec 2, 2025</span>
<span style="left:1883.67px;top:1044.19px;font-size:23.4px;line-height:23.4px;color:#c0461a;font-weight:700;letter-spacing:0.336px;">23 days</span>
<span style="left:2075.05px;top:1044.73px;font-size:22.4px;line-height:22.4px;color:#7a22c9;-webkit-text-stroke:0.8px #7a22c9;">7</span>
<span style="left:2210.35px;top:1044.73px;font-size:22.4px;line-height:22.4px;color:#17793b;-webkit-text-stroke:0.8px #17793b;">2</span>
<span style="left:2318.03px;top:1027.28px;font-size:24px;line-height:24px;color:#0e1112;letter-spacing:0.071px;-webkit-text-stroke:0.3px #0e1112;">Dec 25, 2025</span>
<span style="left:2318.49px;top:1060.46px;font-size:22.6px;line-height:22.6px;color:#8a8a8a;letter-spacing:0.439px;">14h ago</span>
<span style="left:2562.07px;top:1043.98px;font-size:24px;line-height:24px;color:#b3201f;letter-spacing:0.074px;">Overdue</span>
<span style="left:2798.45px;top:1043.98px;font-size:24px;line-height:24px;color:#0a0a0a;letter-spacing:0.649px;-webkit-text-stroke:0.6px #0a0a0a;">Send</span>
<span style="left:463.69px;top:1132.64px;font-size:24.4px;line-height:24.4px;color:#0e1112;-webkit-text-stroke:0.3px #0e1112;">INV-2024-001</span>
<span style="left:690.90px;top:1132.64px;font-size:24.4px;line-height:24.4px;color:#0e1112;-webkit-text-stroke:0.3px #0e1112;">Acme Corporation</span>
<span style="left:1096.42px;top:1132.64px;font-size:24.4px;line-height:24.4px;color:#0e1112;letter-spacing:-0.255px;-webkit-text-stroke:0.3px #0e1112;">shubhkathuria.u@gmail.c…</span>
<span style="left:1436.90px;top:1132.98px;font-size:24px;line-height:24px;color:#0e1112;-webkit-text-stroke:0.3px #0e1112;">$5,400.00</span>
<span style="left:1639.72px;top:1132.98px;font-size:24px;line-height:24px;color:#0e1112;-webkit-text-stroke:0.3px #0e1112;">Dec 6, 2025</span>
<span style="left:1882.94px;top:1133.19px;font-size:23.4px;line-height:23.4px;color:#c0461a;font-weight:700;letter-spacing:0.458px;">19 days</span>
<span style="left:2075.05px;top:1133.73px;font-size:22.4px;line-height:22.4px;color:#7a22c9;-webkit-text-stroke:0.8px #7a22c9;">6</span>
<span style="left:2210.35px;top:1133.73px;font-size:22.4px;line-height:22.4px;color:#17793b;-webkit-text-stroke:0.8px #17793b;">2</span>
<span style="left:2318.03px;top:1116.28px;font-size:24px;line-height:24px;color:#0e1112;letter-spacing:0.071px;-webkit-text-stroke:0.3px #0e1112;">Dec 25, 2025</span>
<span style="left:2318.49px;top:1149.46px;font-size:22.6px;line-height:22.6px;color:#8a8a8a;letter-spacing:0.439px;">10h ago</span>
<span style="left:2562.07px;top:1132.98px;font-size:24px;line-height:24px;color:#b3201f;letter-spacing:0.074px;">Overdue</span>
<span style="left:2798.45px;top:1132.98px;font-size:24px;line-height:24px;color:#0a0a0a;letter-spacing:0.649px;-webkit-text-stroke:0.6px #0a0a0a;">Send</span>
<span style="left:1719.25px;top:1588.29px;font-size:28px;line-height:28px;color:#4a4f52;letter-spacing:-0.980px;transform:scaleX(0.9845);">Page Size:</span>
<span style="left:2011.91px;top:1588.29px;font-size:28px;line-height:28px;color:#161a1c;transform:scaleX(0.8512);-webkit-text-stroke:1.0px #161a1c;">1</span>
<span style="left:2036.10px;top:1588.29px;font-size:28px;line-height:28px;color:#161a1c;">to</span>
<span style="left:2067.20px;top:1588.29px;font-size:28px;line-height:28px;color:#161a1c;transform:scaleX(1.0667);-webkit-text-stroke:1.0px #161a1c;">6</span>
<span style="left:2091.22px;top:1588.29px;font-size:28px;line-height:28px;color:#161a1c;">of</span>
<span style="left:2122.48px;top:1588.29px;font-size:28px;line-height:28px;color:#161a1c;transform:scaleX(1.0819);-webkit-text-stroke:1.0px #161a1c;">6</span>
<span style="left:2465.46px;top:1588.29px;font-size:28px;line-height:28px;color:#8a8a8a;letter-spacing:-0.980px;transform:scaleX(0.9775);">Page</span>
<span style="left:2533.62px;top:1588.29px;font-size:28px;line-height:28px;color:#6a6a6a;transform:scaleX(0.7882);-webkit-text-stroke:1.0px #6a6a6a;">1</span>
<span style="left:2556.72px;top:1588.29px;font-size:28px;line-height:28px;color:#8a8a8a;letter-spacing:-0.972px;">of</span>
<span style="left:2586.94px;top:1588.29px;font-size:28px;line-height:28px;color:#6a6a6a;transform:scaleX(0.8355);-webkit-text-stroke:1.0px #6a6a6a;">1</span>
</div>
</div>
</body></html>
